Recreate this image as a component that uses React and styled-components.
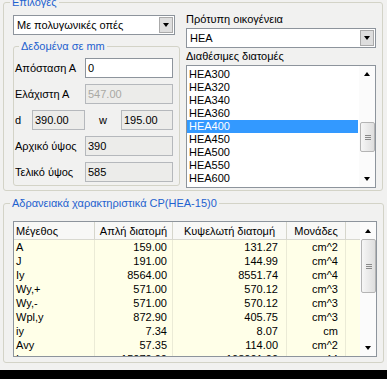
import React from 'react';
import styled, { createGlobalStyle } from 'styled-components';

const GlobalStyle = createGlobalStyle`
  html, body {
    margin: 0;
    padding: 0;
    background: #f1f1f0;
  }
  body {
    font-family: 'Liberation Sans', Arial, sans-serif;
    font-size: 11px;
    color: #000;
  }
`;

const Window = styled.div`
  width: 387px;
  height: 379px;
  background: #f1f1f0;
  display: flex;
  flex-direction: column;
  overflow: hidden;
`;

const Group = styled.fieldset`
  box-sizing: border-box;
  margin: ${p => p.$margin};
  padding: ${p => p.$padding};
  width: ${p => p.$width}px;
  border: 1px solid #d3d3c7;
  border-radius: 3px;
  min-width: 0;
`;

const Legend = styled.legend`
  padding: 0 2px;
  margin-left: ${p => p.$offset}px;
  color: #1f62cf;
  line-height: 13px;
`;

const TopGrid = styled.div`
  display: grid;
  grid-template-columns: 167px 190px;
  column-gap: 6px;
  align-items: start;
`;

const Column = styled.div`
  display: flex;
  flex-direction: column;
`;

const Caption = styled.div`
  line-height: 13px;
  height: 13px;
  margin-bottom: 2px;
  margin-top: ${p => p.$top || 0}px;
  white-space: nowrap;
`;

const Select = styled.div`
  box-sizing: border-box;
  height: 20px;
  margin-top: ${p => p.$top || 0}px;
  width: ${p => p.$width}px;
  border: 1px solid #8d949c;
  background: #fff;
  display: flex;
  align-items: center;
  padding: 0 1px 0 3px;
`;

const SelectText = styled.span`
  flex: 1;
  white-space: nowrap;
  overflow: hidden;
`;

const DropButton = styled.span`
  box-sizing: border-box;
  width: 14px;
  height: 16px;
  background: #dedede;
  border: 1px solid #aaaaaa;
  display: flex;
  align-items: center;
  justify-content: center;
`;

const Arrow = styled.span`
  width: 0;
  height: 0;
  border-left: 3.5px solid transparent;
  border-right: 3.5px solid transparent;
  ${p => (p.$up ? 'border-bottom: 4px solid #000;' : 'border-top: 4px solid #000;')}
`;

const Rows = styled.div`
  display: flex;
  flex-direction: column;
  gap: 6px;
`;

const Row = styled.div`
  display: flex;
  align-items: center;
  height: 20px;
`;

const Label = styled.span`
  width: ${p => p.$width}px;
  flex: none;
  white-space: nowrap;
  text-align: ${p => p.$align || 'left'};
`;

const Field = styled.div`
  box-sizing: border-box;
  width: ${p => p.$width}px;
  height: 20px;
  line-height: 18px;
  padding-left: 2px;
  border: 1px solid ${p => (p.$editable ? '#8d949c' : '#b5b8bc')};
  background: ${p => (p.$editable ? '#fff' : '#ececea')};
  color: ${p => (p.$disabled ? '#a9a9a4' : '#000')};
`;

const ListBox = styled.div`
  box-sizing: border-box;
  height: 123px;
  border: 1px solid #8d949c;
  background: #fff;
  display: flex;
  overflow: hidden;
`;

const ListItems = styled.div`
  flex: 1;
  padding: 2px 1px 0 0;
  overflow: hidden;
`;

const ListItem = styled.div`
  line-height: 13px;
  height: 13px;
  padding-left: 2px;
  background: ${p => (p.$selected ? '#3399ff' : 'transparent')};
  color: ${p => (p.$selected ? '#fff' : '#000')};
`;

const ScrollBar = styled.div`
  width: 16px;
  flex: none;
  display: flex;
  flex-direction: column;
  background: #fbfbfb;
`;

const ScrollArrow = styled.div`
  height: ${p => p.$height || 16}px;
  display: flex;
  align-items: center;
  justify-content: center;
  flex: none;
`;

const Track = styled.div`
  flex: 1;
  display: flex;
  flex-direction: column;
`;

const Thumb = styled.div`
  box-sizing: border-box;
  margin-top: ${p => p.$offset}px;
  height: ${p => p.$size}px;
  width: 15px;
  margin-left: 1px;
  border: 1px solid #b4b4b4;
  border-radius: 2px;
  background: linear-gradient(to right, #f6f6f6, #dedede);
  display: flex;
  align-items: center;
  justify-content: center;
`;

const Grip = styled.span`
  width: 6px;
  height: 5px;
  border-top: 1px solid #8a8a8a;
  border-bottom: 1px solid #8a8a8a;
  box-sizing: border-box;
  position: relative;
  &::after {
    content: '';
    position: absolute;
    left: 0;
    right: 0;
    top: 1px;
    border-top: 1px solid #8a8a8a;
  }
`;

const Table = styled.div`
  box-sizing: border-box;
  height: 136px;
  border: 1px solid #8d949c;
  display: flex;
  background: #ffffe8;
  overflow: hidden;
`;

const TableBody = styled.div`
  flex: 1;
  overflow: hidden;
`;

const Grid = styled.div`
  display: grid;
  grid-template-columns: 81px 78px 114px 59px 1fr;
`;

const HeadCell = styled.div`
  height: 18px;
  line-height: 18px;
  background: #f8f8f6;
  border-bottom: 1px solid #d9d9d0;
  border-right: ${p => (p.$last ? 'none' : '1px solid #d6d6cc')};
  text-align: ${p => p.$align || 'center'};
  padding-left: ${p => (p.$align === 'left' ? 2 : 0)}px;
  white-space: nowrap;
  box-sizing: border-box;
`;

const Cell = styled.div`
  height: 14px;
  line-height: 14px;
  border-right: ${p => (p.$last ? 'none' : '1px solid #ebebd6')};
  text-align: ${p => p.$align || 'right'};
  padding: 0 ${p => p.$pad || 0}px 0 ${p => (p.$align === 'left' ? 2 : 0)}px;
  white-space: nowrap;
  box-sizing: border-box;
`;

const Taskbar = styled.div`
  margin-top: auto;
  height: 9px;
  background: #000;
`;

const sections = ['HEA300', 'HEA320', 'HEA340', 'HEA360', 'HEA400', 'HEA450', 'HEA500', 'HEA550', 'HEA600', 'HEA650'];

const props = [
  ['A', '159.00', '131.27', 'cm^2'],
  ['J', '191.00', '144.99', 'cm^4'],
  ['Iy', '8564.00', '8551.74', 'cm^4'],
  ['Wy,+', '571.00', '570.12', 'cm^3'],
  ['Wy,-', '571.00', '570.12', 'cm^3'],
  ['Wpl,y', '872.90', '405.75', 'cm^3'],
  ['iy', '7.34', '8.07', 'cm'],
  ['Avy', '57.35', '114.00', 'cm^2'],
  ['Iz', '15070.00', '108001.00', 'cm^4'],
];

function Scroller({ thumbOffset, thumbSize, topHeight }) {
  return (
    <ScrollBar>
      <ScrollArrow $height={topHeight}><Arrow $up /></ScrollArrow>
      <Track>
        <Thumb $offset={thumbOffset} $size={thumbSize}><Grip /></Thumb>
      </Track>
      <ScrollArrow><Arrow /></ScrollArrow>
    </ScrollBar>
  );
}

export default function App() {
  return (
    <Window>
      <GlobalStyle />
      <Group $margin="-4px 0 0 3px" $padding="4px 5px 2px 9px" $width={380}>
        <Legend $offset={-3}>Επιλογές</Legend>
        <TopGrid>
          <Column>
            <Select $top={2} $width={162}>
              <SelectText>Με πολυγωνικές οπές</SelectText>
              <DropButton><Arrow /></DropButton>
            </Select>
            <Group $margin="5px 0 0 0" $padding="5px 6px 3px 1px" $width={167}>
              <Legend $offset={4}>Δεδομένα σε mm</Legend>
              <Rows>
                <Row>
                  <Label $width={70}>Απόσταση Α</Label>
                  <Field $width={88} $editable>0</Field>
                </Row>
                <Row>
                  <Label $width={70}>Ελάχιστη Α</Label>
                  <Field $width={88} $disabled>547.00</Field>
                </Row>
                <Row>
                  <Label $width={17}>d</Label>
                  <Field $width={53}>390.00</Field>
                  <Label $width={36} $align="center">w</Label>
                  <Field $width={52}>195.00</Field>
                </Row>
                <Row>
                  <Label $width={70}>Αρχικό ύψος</Label>
                  <Field $width={88}>390</Field>
                </Row>
                <Row>
                  <Label $width={70}>Τελικό ύψος</Label>
                  <Field $width={88}>585</Field>
                </Row>
              </Rows>
            </Group>
          </Column>
          <Column>
            <Caption>Πρότυπη οικογένεια</Caption>
            <Select $width={190}>
              <SelectText>HEA</SelectText>
              <DropButton><Arrow /></DropButton>
            </Select>
            <Caption $top={2}>Διαθέσιμες διατομές</Caption>
            <ListBox>
              <ListItems>
                {sections.map(s => (
                  <ListItem key={s} $selected={s === 'HEA400'}>{s}</ListItem>
                ))}
              </ListItems>
              <Scroller thumbOffset={40} thumbSize={30} topHeight={16} />
            </ListBox>
          </Column>
        </TopGrid>
      </Group>

      <Group $margin="6px 0 0 3px" $padding="11px 6px 5px 9px" $width={381}>
        <Legend $offset={-3}>Αδρανειακά χαρακτηριστικά CP(HEA-15)0</Legend>
        <Table>
          <TableBody>
            <Grid>
              <HeadCell $align="left">Μέγεθος</HeadCell>
              <HeadCell>Απλή διατομή</HeadCell>
              <HeadCell>Κυψελωτή διατομή</HeadCell>
              <HeadCell>Μονάδες</HeadCell>
              <HeadCell $last />
              {props.map(([name, simple, cell, unit]) => (
                <React.Fragment key={name}>
                  <Cell $align="left">{name}</Cell>
                  <Cell $pad={5}>{simple}</Cell>
                  <Cell $pad={8}>{cell}</Cell>
                  <Cell $pad={7}>{unit}</Cell>
                  <Cell $last />
                </React.Fragment>
              ))}
            </Grid>
          </TableBody>
          <Scroller thumbOffset={0} thumbSize={54} topHeight={17} />
        </Table>
      </Group>
      <Taskbar />
    </Window>
  );
}
